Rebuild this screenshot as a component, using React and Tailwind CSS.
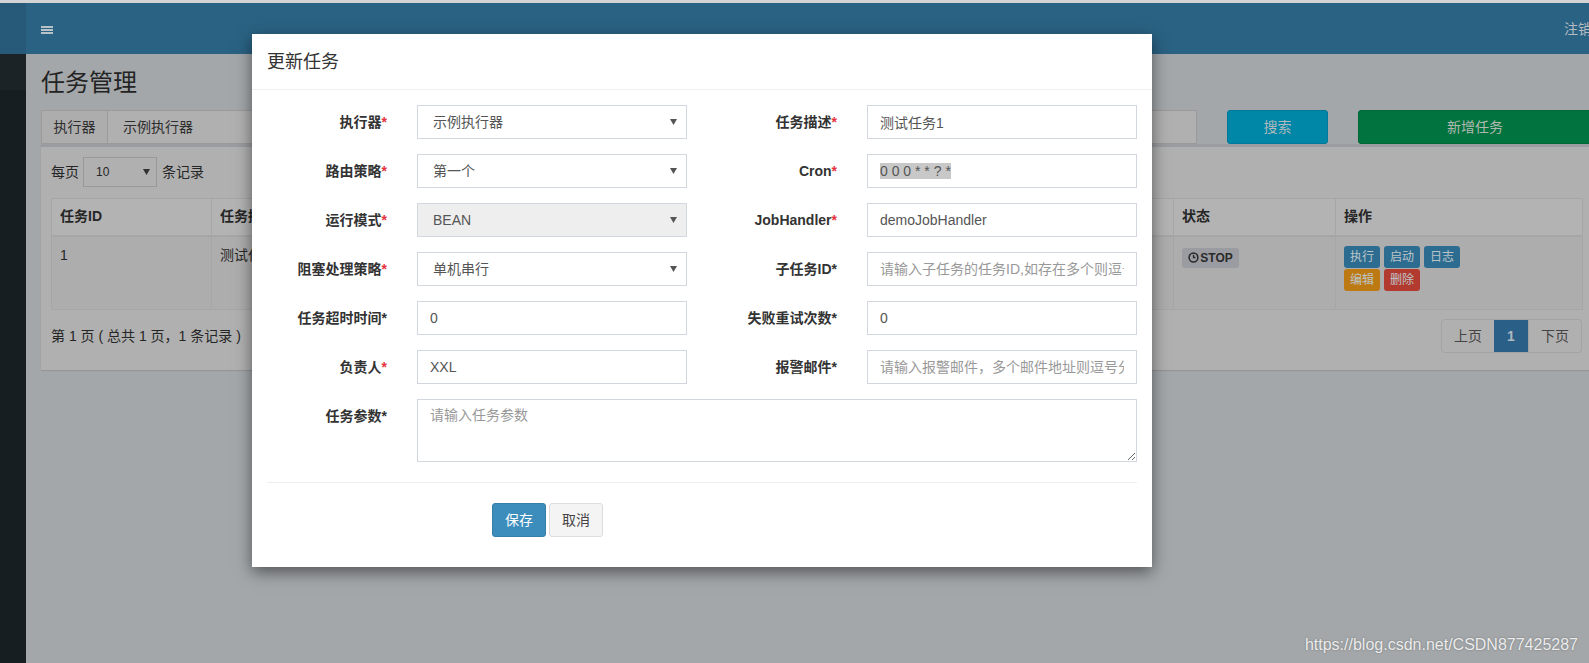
import React from "react";

const Arrow = ({ color = "#555" }) => (
  <svg width="7" height="6" viewBox="0 0 7 6">
    <path d="M0 0H7L3.5 6Z" fill={color} />
  </svg>
);

const Select = ({ value, disabled }) => (
  <div
    className={`flex h-[34px] items-center justify-between border border-[#d2d6de] pl-[15px] pr-[9px] text-[14px] text-[#555] ${
      disabled ? "bg-[#eeeeee]" : "bg-white"
    }`}
  >
    <span>{value}</span>
    <Arrow />
  </div>
);

const Input = ({ value, placeholder }) => (
  <input
    readOnly
    defaultValue={value}
    placeholder={placeholder}
    className="block h-[34px] w-full border border-[#d2d6de] bg-white px-3 text-[14px] text-[#555] outline-none placeholder:text-[#999]"
  />
);

const CronInput = () => (
  <div className="flex h-[34px] items-center border border-[#d2d6de] bg-white px-3 text-[14px] text-[#555]">
    <span className="bg-[#c8c8c8] leading-[16px]">0 0 0 * * ? *</span>
  </div>
);

const Field = ({ f }) => {
  if (f.sel) return <Select value={f.sel} disabled={f.dis} />;
  if (f.cron) return <CronInput />;
  return <Input value={f.val} placeholder={f.ph} />;
};

const Label = ({ f }) => (
  <label className="block w-[150px] shrink-0 px-[15px] pt-[7px] text-right text-[14px] leading-[20px] font-bold text-[#333]">
    {f.l}
    {f.r ? <span className="text-[#e5323e]">*</span> : "*"}
  </label>
);

const rows = [
  [
    { l: "执行器", r: true, sel: "示例执行器" },
    { l: "任务描述", r: true, val: "测试任务1" },
  ],
  [
    { l: "路由策略", r: true, sel: "第一个" },
    { l: "Cron", r: true, cron: true },
  ],
  [
    { l: "运行模式", r: true, sel: "BEAN", dis: true },
    { l: "JobHandler", r: true, val: "demoJobHandler" },
  ],
  [
    { l: "阻塞处理策略", r: true, sel: "单机串行" },
    { l: "子任务ID", ph: "请输入子任务的任务ID,如存在多个则逗号分隔" },
  ],
  [
    { l: "任务超时时间", val: "0" },
    { l: "失败重试次数", val: "0" },
  ],
  [
    { l: "负责人", r: true, val: "XXL" },
    { l: "报警邮件", ph: "请输入报警邮件，多个邮件地址则逗号分隔" },
  ],
];

const ClockIcon = () => (
  <svg width="11" height="11" viewBox="0 0 10 10">
    <circle cx="5" cy="5" r="4" fill="none" stroke="#2a2a2a" strokeWidth="1.4" />
    <path d="M5 2.6V5H6.8" fill="none" stroke="#2a2a2a" strokeWidth="1.2" />
  </svg>
);

const ActBtn = ({ children, color }) => (
  <span
    className={`flex h-[22px] w-[36px] items-center justify-center rounded-[3px] text-[12px] text-[#bcc4c8] ${color}`}
  >
    {children}
  </span>
);

export default function App() {
  return (
    <div className="relative h-[663px] w-[1589px] overflow-hidden bg-[#a3a7aa] font-['Liberation_Sans','Noto_Sans_CJK_SC',sans-serif]">
      <div className="h-[3px] bg-[#d4d4d4]" />
      <div className="flex h-[660px]">
        <aside className="flex w-[26px] shrink-0 flex-col bg-[#171e22]">
          <div className="h-[51px] bg-[#265a78]" />
          <div className="h-[36px] bg-[#1c2327]" />
        </aside>

        <main className="w-[1581px] shrink-0">
          <header className="flex h-[51px] items-center justify-between bg-[#2a6283] px-[15px]">
            <div className="mt-[2px] flex w-[12px] flex-col gap-[1px]">
              <span className="h-[2px] bg-[#b8c0c8]" />
              <span className="h-[2px] bg-[#b8c0c8]" />
              <span className="h-[2px] bg-[#b8c0c8]" />
            </div>
            <span className="mt-[2px] text-[14px] text-[#b4bcc2]">注销</span>
          </header>

          <section className="px-[15px] pt-[15px]">
            <h1 className="text-[24px] leading-[27px] text-[#232323]">任务管理</h1>

            <div className="mt-[14px] flex h-[34px] gap-[30px] text-[14px] text-[#2e2e2e]">
              <div className="flex w-[365px] border border-[#9a9a9a]">
                <span className="flex w-[66px] items-center justify-center border-r border-[#9a9a9a] bg-[#adadad]">
                  执行器
                </span>
                <span className="flex flex-1 items-center bg-[#b0b0b0] pl-[15px]">示例执行器</span>
              </div>
              <div className="flex w-[365px] border border-[#9a9a9a] bg-[#b0b0b0]" />
              <div className="flex w-[366px] border border-[#9a9a9a] bg-[#b0b0b0]" />
              <button className="w-[101px] rounded-[3px] border border-[#00789a] bg-[#0087a8] text-[14px] text-[#b0b8bb]">
                搜索
              </button>
              <button className="w-[234px] rounded-[3px] border border-[#006635] bg-[#00733e] text-[14px] text-[#b0b8b0]">
                新增任务
              </button>
            </div>

            <div className="border-t-[3px] border-[#9a9ca1] bg-[#b0b0b0] px-[10px] pt-[10px] pb-[17px] text-[14px] text-[#262626] shadow-[0_1px_1px_rgba(0,0,0,0.1)]">
              <div className="flex h-[30px] items-center gap-[4px]">
                <span>每页</span>
                <div className="flex h-[30px] w-[74px] items-center justify-between border border-[#999] pl-[12px] pr-[6px] text-[12px]">
                  <span>10</span>
                  <Arrow color="#333" />
                </div>
                <span className="ml-[1px]">条记录</span>
              </div>

              <table className="mt-[11px] w-[1531px] table-fixed border-collapse border border-[#a6a6a6]">
                <thead>
                  <tr className="h-[37px] bg-[#b3b3b3] text-left font-bold">
                    <th className="w-[160px] border border-b-2 border-[#a6a6a6] px-[8px]">任务ID</th>
                    <th className="w-[240px] border border-b-2 border-[#a6a6a6] px-[8px]">任务描述</th>
                    <th className="w-[240px] border border-b-2 border-[#a6a6a6] px-[8px]" />
                    <th className="w-[240px] border border-b-2 border-[#a6a6a6] px-[8px]" />
                    <th className="w-[242px] border border-b-2 border-[#a6a6a6] px-[8px]" />
                    <th className="w-[162px] border border-b-2 border-[#a6a6a6] px-[8px]">状态</th>
                    <th className="w-[247px] border border-b-2 border-[#a6a6a6] px-[8px]">操作</th>
                  </tr>
                </thead>
                <tbody>
                  <tr className="h-[74px] bg-[#adadad] align-top">
                    <td className="border border-[#a6a6a6] px-[8px] pt-[8px] leading-[20px]">1</td>
                    <td className="border border-[#a6a6a6] px-[8px] pt-[8px] leading-[20px]">测试任务1</td>
                    <td className="border border-[#a6a6a6]" />
                    <td className="border border-[#a6a6a6]" />
                    <td className="border border-[#a6a6a6]" />
                    <td className="border border-[#a6a6a6] px-[8px] pt-[11px]">
                      <span className="flex h-[20px] w-[57px] items-center justify-center gap-[1px] rounded-[3px] bg-[#9a9ca2] text-[12px] font-bold text-[#2a2a2a]">
                        <ClockIcon />
                        STOP
                      </span>
                    </td>
                    <td className="border border-[#a6a6a6] px-[8px] pt-[9px]">
                      <div className="flex gap-[4px]">
                        <ActBtn color="bg-[#2c6c91]">执行</ActBtn>
                        <ActBtn color="bg-[#2c6c91]">启动</ActBtn>
                        <ActBtn color="bg-[#2c6c91]">日志</ActBtn>
                      </div>
                      <div className="mt-[1px] flex gap-[4px]">
                        <ActBtn color="bg-[#bd7a12]">编辑</ActBtn>
                        <ActBtn color="bg-[#b23a2f]">删除</ActBtn>
                      </div>
                    </td>
                  </tr>
                </tbody>
              </table>

              <div className="mt-[9px] flex h-[34px] w-[1531px] items-center justify-between">
                <span>第 1 页 ( 总共 1 页，1 条记录 )</span>
                <div className="flex h-[34px] overflow-hidden rounded-[4px] border border-[#a3a3a3] text-[14px]">
                  <span className="flex w-[52px] items-center justify-center text-[#444]">上页</span>
                  <span className="flex w-[34px] items-center justify-center bg-[#2a5f88] font-bold text-[#b0b8c0]">1</span>
                  <span className="flex w-[53px] items-center justify-center border-l border-[#a3a3a3] text-[#444]">下页</span>
                </div>
              </div>
            </div>
          </section>
        </main>
      </div>

      {/* modal */}
      <div className="absolute top-[34px] left-[252px] w-[900px] bg-white shadow-[0_5px_15px_rgba(0,0,0,0.5)]">
        <div className="border-b border-[#f0f0f0] px-[15px] pt-[15px] pb-[14px] text-[18px] leading-[26px] text-[#333]">
          更新任务
        </div>
        <div className="pt-[15px] pb-[30px]">
          {rows.map((row, i) => (
            <div key={i} className="mb-[15px] flex">
              {row.map((f) => (
                <React.Fragment key={f.l}>
                  <Label f={f} />
                  <div className="w-[300px] shrink-0 px-[15px]">
                    <Field f={f} />
                  </div>
                </React.Fragment>
              ))}
            </div>
          ))}
          <div className="flex">
            <Label f={{ l: "任务参数" }} />
            <div className="w-[750px] shrink-0 px-[15px]">
              <textarea
                readOnly
                placeholder="请输入任务参数"
                className="block h-[63px] w-full border border-[#d2d6de] px-3 py-[5px] text-[14px] leading-[20px] text-[#555] outline-none placeholder:text-[#999]"
              />
            </div>
          </div>
          <hr className="mx-[15px] mt-[20px] border-[#eeeeee]" />
          <div className="mt-[20px] flex gap-[3px] pl-[240px]">
            <button className="h-[34px] w-[54px] rounded-[3px] border border-[#367fa9] bg-[#3c8dbc] text-[14px] text-white">
              保存
            </button>
            <button className="h-[34px] w-[54px] rounded-[3px] border border-[#dddddd] bg-[#f4f4f4] text-[14px] text-[#444]">
              取消
            </button>
          </div>
        </div>
      </div>

      <span className="absolute right-[11px] bottom-[8px] text-[16px] leading-[20px] text-[#ececec] [text-shadow:0_0_2px_rgba(0,0,0,0.35)]">
        https://blog.csdn.net/CSDN877425287
      </span>
    </div>
  );
}
